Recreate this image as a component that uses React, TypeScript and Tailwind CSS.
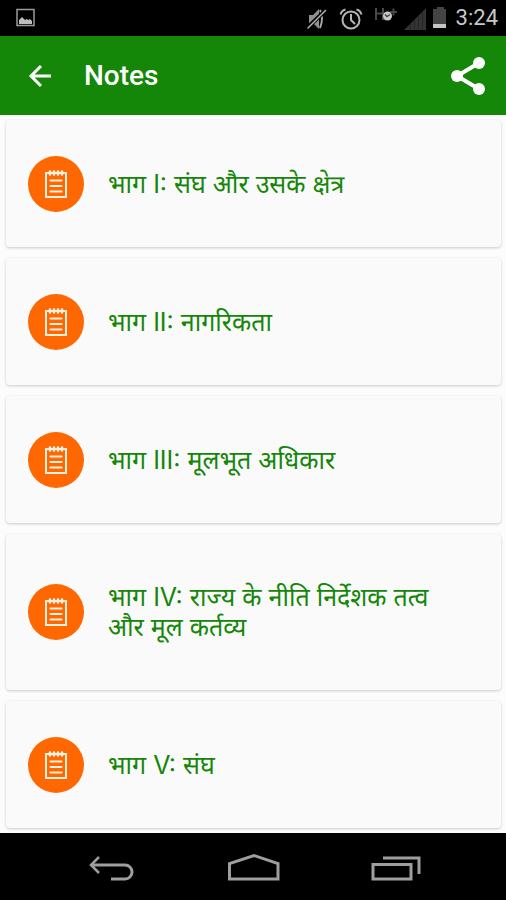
const chapters = [
  "भाग I: संघ और उसके क्षेत्र",
  "भाग II: नागरिकता",
  "भाग III: मूलभूत अधिकार",
  "भाग IV: राज्य के नीति निर्देशक तत्व और मूल कर्तव्य",
  "भाग V: संघ",
];

function NotepadIcon() {
  return (
    <svg width="24" height="30" viewBox="0 0 24 30" fill="none" stroke="#fff0e2" aria-hidden="true">
      <rect x="2" y="4" width="20" height="24" strokeWidth="2" />
      <path d="M6.500 11.500h11M6.500 17h11M6.500 22.500h11" strokeWidth="2.200" strokeLinecap="round" />
      <path d="M6 2.500v3M10 2.500v3M14 2.500v3M18 2.500v3" strokeWidth="2.600" strokeLinecap="round" />
    </svg>
  );
}

function StatusBar() {
  return (
    <div className="flex h-9 items-center bg-black pl-4 pr-2">
      <svg width="20" height="20" viewBox="0 0 20 20" aria-hidden="true">
        <rect x="1" y="1.500" width="17" height="16" fill="none" stroke="#9a9a9a" strokeWidth="1.500" />
        <path d="M3 16v-4l3-3 3 3 1.500-1 2 1 1.500-1 2 2v3z" fill="#bdbdbd" />
      </svg>
      <div className="ml-auto flex items-center">
        <svg width="140" height="36" viewBox="0 0 140 36" aria-hidden="true">
          <path d="M3 15h4l6-6v20l-6-6H3z" fill="#8f8f8f" />
          <path d="M14 10q4 8 0 18" fill="none" stroke="#a8a8a8" strokeWidth="2" />
          <path d="M1 28L20 10" stroke="#000" strokeWidth="4" />
          <path d="M1.500 28.500L20 10" stroke="#b4b4b4" strokeWidth="1.500" />
          <g fill="none" stroke="#b4b4b4" strokeWidth="2">
            <circle cx="45" cy="20" r="8.500" />
            <path d="M45 14v6l4 4" />
            <path d="M34.500 14.500q1-4 5-5M55.500 14.500q-1-4-5-5" />
          </g>
          <g fill="none" stroke="#484848" strokeWidth="2">
            <path d="M70 8v12M77 8v12M70 13.500h7M84 12h7M87.500 8.500v7" />
          </g>
          <circle cx="81.500" cy="16" r="4.500" fill="#c8c8c8" />
          <path d="M79 14.500l2 2 3-2" fill="none" stroke="#444" strokeWidth="1.500" />
          <path d="M98 30h22V8z" fill="#333333" />
          <path d="M104.500 24v6M108.500 20v10M112.500 16v14M116.500 12v18" stroke="#252525" />
          <path d="M127 9h4V7h7v2h3v19h-14z" fill="#444444" />
          <path d="M127 24h14v4h-14z" fill="#c4c4c4" />
        </svg>
        <span className="ml-2.5 font-[Roboto,sans-serif] text-[22px] leading-9 text-[#c8c8c8]">3:24</span>
      </div>
    </div>
  );
}

function NavBar() {
  return (
    <nav className="flex h-[67px] items-center justify-center gap-[91px] bg-black" aria-label="System navigation">
      <button type="button" aria-label="Back" className="flex">
        <svg width="50" height="30" viewBox="0 0 50 30" fill="none" stroke="#9e9e9e" strokeWidth="3">
          <path d="M6 13h34a7 7 0 0 1 0 14H26" />
          <path d="M14 5L6 13l8 8" strokeWidth="2.500" />
        </svg>
      </button>
      <button type="button" aria-label="Home" className="flex">
        <svg width="54" height="30" viewBox="0 0 54 30" fill="none" stroke="#9e9e9e" strokeWidth="3">
          <path d="M3.500 27V11.500L28 3.500 52 11.500V27z" />
        </svg>
      </button>
      <button type="button" aria-label="Recent apps" className="flex">
        <svg width="50" height="30" viewBox="0 0 50 30" fill="none" stroke="#9e9e9e" strokeWidth="3">
          <path d="M2 12.500h38V27H2z" />
          <path d="M12 6h36v16" />
        </svg>
      </button>
    </nav>
  );
}

export default function App() {
  return (
    <div className="flex min-h-screen flex-col bg-[#fcfcfc]">
      <StatusBar />
      <header className="flex h-[79px] items-center bg-[#148608] pl-7 pr-5 text-white">
        <button type="button" aria-label="Back" className="flex">
          <svg width="24" height="24" viewBox="0 0 24 24" fill="none" stroke="currentColor" strokeWidth="3">
            <path d="M23 12H3M13 2L3 12l10 10" />
          </svg>
        </button>
        <h1 className="ml-8 font-[Roboto,sans-serif] text-[28px] font-medium leading-8">Notes</h1>
        <button type="button" aria-label="Share" className="ml-auto flex">
          <svg width="36" height="40" viewBox="0 0 36 40" fill="currentColor">
            <path d="M29 7L7 20l22 13" fill="none" stroke="currentColor" strokeWidth="4" />
            <circle cx="29" cy="7" r="6" />
            <circle cx="7" cy="20" r="6" />
            <circle cx="29" cy="33" r="6" />
          </svg>
        </button>
      </header>
      <main className="flex-1 px-[5px] py-[5px] pl-1.5">
        <ul className="flex flex-col gap-[11px]">
          {chapters.map((title) => (
            <li key={title}>
              <a
                href="#"
                className="flex min-h-[127px] items-center rounded-sm bg-[#fafafa] pl-[22px] pr-14 shadow-[0_1px_3px_rgba(0,0,0,0.2)]"
              >
                <span className="flex size-14 shrink-0 items-center justify-center rounded-full bg-[#ff6800]">
                  <NotepadIcon />
                </span>
                <span className="ml-6 py-12 font-[Inter,'Noto_Sans_Devanagari',sans-serif] text-[25px] leading-[30px] text-[#148608]">
                  {title}
                </span>
              </a>
            </li>
          ))}
        </ul>
      </main>
      <NavBar />
    </div>
  );
}
